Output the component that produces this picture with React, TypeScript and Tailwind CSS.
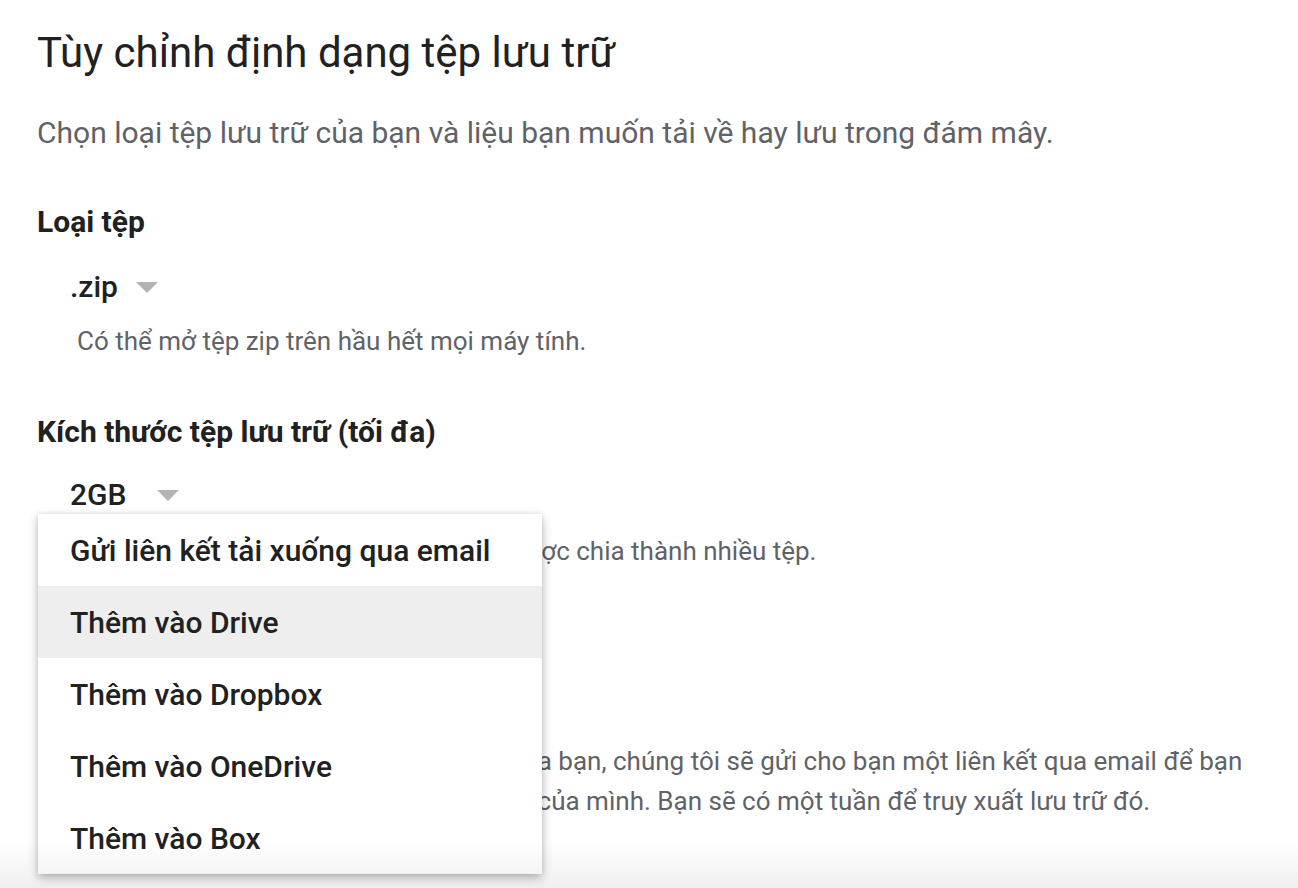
import React from "react";

const font = { fontFamily: "Roboto, 'Noto Sans', sans-serif" };

function Caret() {
  return (
    <svg width="22" height="11" viewBox="0 0 22 11" className="shrink-0">
      <path d="M0 0 L22 0 L11 11 Z" fill="#b3b3b3" />
    </svg>
  );
}

const menuItems = [
  "Gửi liên kết tải xuống qua email",
  "Thêm vào Drive",
  "Thêm vào Dropbox",
  "Thêm vào OneDrive",
  "Thêm vào Box",
];

export default function App() {
  return (
    <div className="relative h-[888px] w-[1298px] overflow-hidden bg-white" style={font}>
      <div className="pl-[37px] pt-[27px]">
        <h1 className="text-[42px] leading-[52px] font-normal text-[#212121]">
          Tùy chỉnh định dạng tệp lưu trữ
        </h1>
        <p className="mt-[35px] text-[30px] leading-[38px] text-[#5f6368]">
          Chọn loại tệp lưu trữ của bạn và liệu bạn muốn tải về hay lưu trong đám mây.
        </p>

        <h2 className="mt-[51px] text-[30px] leading-[38px] font-bold text-[#212121]">
          Loại tệp
        </h2>
        <div className="mt-[28px] flex items-center pl-[33px] h-[36px]">
          <span className="text-[30px] leading-[36px] font-medium text-[#212121]">.zip</span>
          <span className="ml-[18px]"><Caret /></span>
        </div>
        <p className="mt-[20px] pl-[40px] text-[26px] leading-[32px] text-[#5f6368]">
          Có thể mở tệp zip trên hầu hết mọi máy tính.
        </p>

        <h2 className="mt-[56px] text-[30px] leading-[38px] font-bold text-[#212121]">
          Kích thước tệp lưu trữ (tối đa)
        </h2>
        <div className="mt-[26px] flex items-center pl-[33px] h-[36px]">
          <span className="text-[30px] leading-[36px] font-medium text-[#212121]">2GB</span>
          <span className="ml-[31px]"><Caret /></span>
        </div>
        <p className="mt-[22px] pl-[40px] text-[26px] leading-[32px] text-[#5f6368]">
          Tệp lưu trữ lớn hơn kích thước này sẽ được chia thành nhiều tệp.
        </p>

        <h2 className="mt-[53px] text-[30px] leading-[38px] font-bold text-[#212121] pl-[4px]">
          Phương thức phân phối
        </h2>
        <div className="mt-[27px] flex items-center pl-[33px] h-[36px]">
          <span className="text-[30px] leading-[36px] font-medium text-[#212121]">
            Gửi liên kết tải xuống qua email
          </span>
        </div>
        <p className="mt-[20px] pl-[40px] whitespace-nowrap text-[26px] leading-[40px] text-[#5f6368]">
          Khi đã tạo xong tệp tin lưu trữ dữ liệu của bạn, chúng tôi sẽ gửi cho bạn một liên kết qua email để bạn
          <br />
          tải xuống cả tệp dữ liệu đã được lưu trữ của mình. Bạn sẽ có một tuần để truy xuất lưu trữ đó.
        </p>
      </div>

      {/* open delivery-method menu */}
      <div className="absolute left-[38px] top-[514px] w-[504px] bg-white shadow-[0_4px_10px_rgba(0,0,0,0.28),0_0_4px_rgba(0,0,0,0.08)]">
        {menuItems.map((item, i) => (
          <div
            key={item}
            className={
              "h-[72px] flex items-center pl-[32px] text-[30px] font-medium text-[#212121] " +
              (i === 1 ? "bg-[#eeeeee]" : "bg-white")
            }
          >
            {item}
          </div>
        ))}
      </div>

      {/* footer fade */}
      <div className="pointer-events-none absolute bottom-0 left-0 h-[48px] w-full bg-linear-to-b from-white/0 to-[#000000]/[0.06]" />
    </div>
  );
}
